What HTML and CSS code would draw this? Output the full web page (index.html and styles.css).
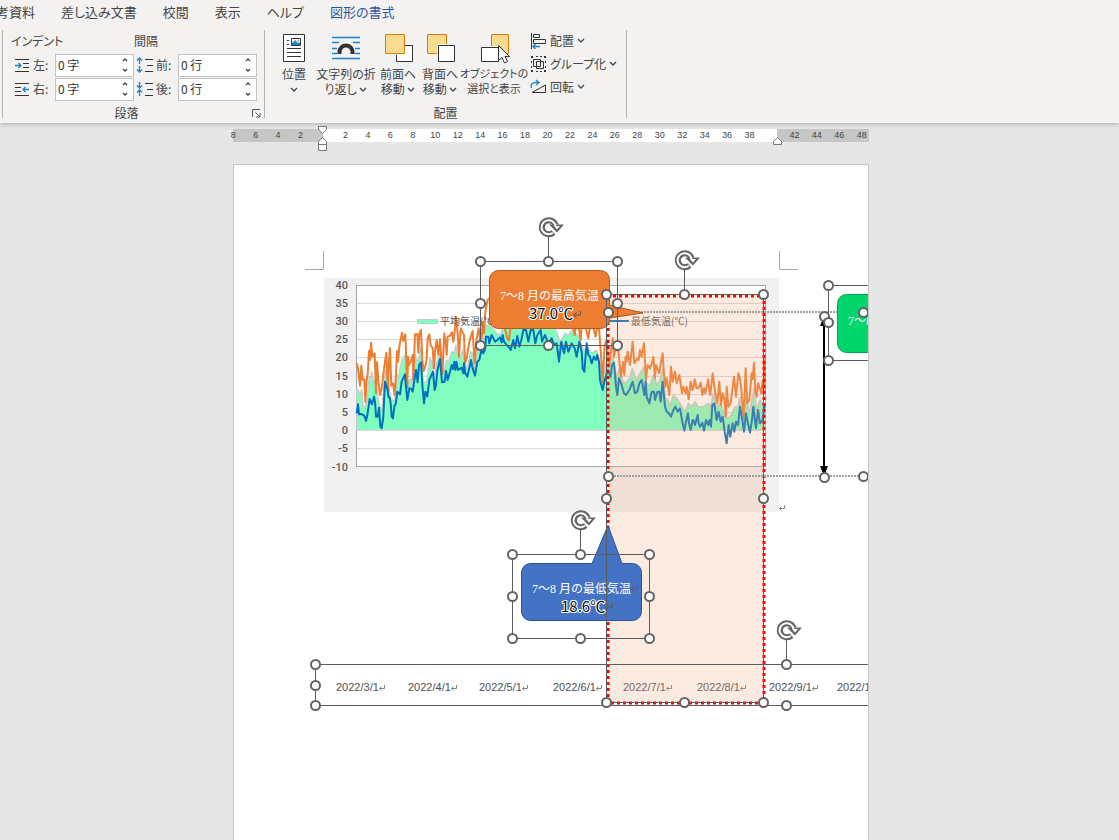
FILE: index.html
```html
<!DOCTYPE html>
<html lang="ja">
<head>
<meta charset="utf-8">
<title>図形の書式</title>
<link rel="stylesheet" href="styles.css">
</head>
<body>
<header class="ribbon">
  <nav class="tabs">
    <button class="tab">参考資料</button>
    <button class="tab">差し込み文書</button>
    <button class="tab">校閲</button>
    <button class="tab">表示</button>
    <button class="tab">ヘルプ</button>
    <button class="tab tab-active">図形の書式</button>
  </nav>
  <div class="groups">
    <section class="group group-paragraph">
      <div class="fields">
        <span class="field-head">インデント</span>
        <span class="field-head">間隔</span>
        <div class="field">
          <svg class="mini" viewBox="0 0 18 16"><path class="ink" d="M2 2.500h14M10 6.500h6M10 10.500h6M2 14.500h14"/><path class="blue" d="M2 8.500h6M5.500 6l2.500 2.500L5.500 11"/></svg>
          <label for="left">左:</label>
          <span class="spin"><input id="left" value="0 字"><span class="steps"><button aria-label="左を増やす"><svg viewBox="0 0 6 4"><path d="M1 3l2-2 2 2"/></svg></button><button aria-label="左を減らす"><svg viewBox="0 0 6 4"><path d="M1 1l2 2 2-2"/></svg></button></span></span>
        </div>
        <div class="field">
          <svg class="mini" viewBox="0 0 18 16"><path class="ink" d="M9 2.500h8M11 8.500h6M9 14.500h8"/><path class="blue" d="M3.500 1v6M1 3.500L3.500 1 6 3.500M3.500 9v6M1 12.500L3.500 15 6 12.500"/></svg>
          <label for="before">前:</label>
          <span class="spin"><input id="before" value="0 行"><span class="steps"><button aria-label="前を増やす"><svg viewBox="0 0 6 4"><path d="M1 3l2-2 2 2"/></svg></button><button aria-label="前を減らす"><svg viewBox="0 0 6 4"><path d="M1 1l2 2 2-2"/></svg></button></span></span>
        </div>
        <div class="field">
          <svg class="mini" viewBox="0 0 18 16"><path class="ink" d="M2 2.500h14M2 6.500h6M2 10.500h6M2 14.500h14"/><path class="blue" d="M10 8.500h6M12.500 6L10 8.500l2.500 2.500"/></svg>
          <label for="right">右:</label>
          <span class="spin"><input id="right" value="0 字"><span class="steps"><button aria-label="右を増やす"><svg viewBox="0 0 6 4"><path d="M1 3l2-2 2 2"/></svg></button><button aria-label="右を減らす"><svg viewBox="0 0 6 4"><path d="M1 1l2 2 2-2"/></svg></button></span></span>
        </div>
        <div class="field">
          <svg class="mini" viewBox="0 0 18 16"><path class="ink" d="M9 2.500h8M11 8.500h6M9 14.500h8"/><path class="blue" d="M3.500 1v6M1 4.500L3.500 7 6 4.500M3.500 9v6M1 11.500L3.500 9 6 11.500"/></svg>
          <label for="after">後:</label>
          <span class="spin"><input id="after" value="0 行"><span class="steps"><button aria-label="後を増やす"><svg viewBox="0 0 6 4"><path d="M1 3l2-2 2 2"/></svg></button><button aria-label="後を減らす"><svg viewBox="0 0 6 4"><path d="M1 1l2 2 2-2"/></svg></button></span></span>
        </div>
      </div>
      <footer class="group-name">段落</footer>
      <button class="launcher" aria-label="段落の設定"><svg viewBox="0 0 9 9"><path d="M.5 8V.5H8M3.500 3.500l4 4M8 4v4H4"/></svg></button>
    </section>

    <section class="group group-arrange">
      <div class="tools">
        <button class="tool">
          <svg class="icon" viewBox="0 0 32 32"><path fill="#fff" stroke="#333" d="M5.500 2.500h21v27h-21z"/><path class="ink" d="M9 8.500h2M9 12.500h2M9 16.500h14M9 20.500h14M9 24.500h14"/><path fill="#fff" stroke="#333" d="M13.500 6.500h9v7h-9z"/><path fill="#1e83c8" d="M14 13v-2l3-3 3 3 1-1 1 1v2z"/><circle cx="20" cy="8.500" r="1" fill="#f09030"/></svg>
          <span>位置</span><span><svg class="chev" viewBox="0 0 8 5"><path d="M1 1l3 3 3-3"/></svg></span>
        </button>
        <button class="tool tool-wide">
          <svg class="icon" viewBox="0 0 32 32"><path class="blue" d="M2 5.500h28M2 10.500h7M23 10.500h7M2 16.500h5M25 16.500h5M2 21.500h5M25 21.500h5M2 26.500h28"/><path fill="none" stroke="#333" stroke-width="4" d="M9.500 22v-2a6.500 6.500 0 0 1 13 0v2"/></svg>
          <span>文字列の折</span><span>り返し <svg class="chev" viewBox="0 0 8 5"><path d="M1 1l3 3 3-3"/></svg></span>
        </button>
        <button class="tool">
          <svg class="icon" viewBox="0 0 32 32"><path fill="#fff" stroke="#333" d="M14.500 13.500h16v16h-16z"/><path fill="#f3f2f1" d="M1 1h22v22H1z"/><path fill="#f8db8f" stroke="#e07b0a" d="M3.500 2.500h19v19h-19z"/></svg>
          <span>前面へ</span><span>移動 <svg class="chev" viewBox="0 0 8 5"><path d="M1 1l3 3 3-3"/></svg></span>
        </button>
        <button class="tool">
          <svg class="icon" viewBox="0 0 32 32"><path fill="#f8db8f" stroke="#e07b0a" d="M3.500 2.500h19v19h-19z"/><path fill="#f3f2f1" d="M13 12h19v19H13z"/><path fill="#fff" stroke="#333" d="M14.500 13.500h16v16h-16z"/></svg>
          <span>背面へ</span><span>移動 <svg class="chev" viewBox="0 0 8 5"><path d="M1 1l3 3 3-3"/></svg></span>
        </button>
        <button class="tool tool-select">
          <svg class="icon" viewBox="0 0 32 32"><path fill="#f8db8f" stroke="#e07b0a" d="M13.500 2.500h17v19h-17z"/><path fill="#f3f2f1" d="M2 14h20v17H2z"/><path fill="#fff" stroke="#333" d="M3.500 15.500h17v14h-17z"/><path fill="#fff" stroke="#333" d="M20.500 13.500v15l3.500-3 2.500 5.500 3-1.500-2.500-5h4.500z"/></svg>
          <span>オブジェクトの</span><span>選択と表示</span>
        </button>
        <div class="stack">
          <button class="small"><svg class="mini" viewBox="0 0 18 16"><path class="ink" d="M2.500 0v16M4.500 1.500h6v3h-6zM4.500 6.500h12v4h-12z"/><path class="blue" d="M4 13.500h7M6.500 11L4 13.500 6.500 16"/></svg>配置 <svg class="chev" viewBox="0 0 8 5"><path d="M1 1l3 3 3-3"/></svg></button>
          <button class="small"><svg class="mini" viewBox="0 0 18 16"><path class="ink" d="M4.500 3.500h7v7h-7zM7.500 5.500h7v7h-7z"/><path fill="#333" d="M2 0h2v2H2zM15 0h2v2h-2zM2 14h2v2H2zM15 14h2v2h-2zM7 0h2v1H7zM11 0h2v1h-2zM7 15h2v1H7zM11 15h2v1h-2zM2 5h1v2H2zM2 10h1v2H2zM16 5h1v2h-1zM16 10h1v2h-1z"/></svg>グループ化 <svg class="chev" viewBox="0 0 8 5"><path d="M1 1l3 3 3-3"/></svg></button>
          <button class="small"><svg class="mini" viewBox="0 0 18 16"><path class="ink" d="M3 13.500h13.500V6z"/><path class="blue" d="M2.500 9C1 5 4 3 9 3.500M7 1l3 2.500L7 6"/></svg>回転 <svg class="chev" viewBox="0 0 8 5"><path d="M1 1l3 3 3-3"/></svg></button>
        </div>
      </div>
      <footer class="group-name">配置</footer>
    </section>
  </div>
</header>

<main class="workspace">
  <div class="ruler">
    <div class="ticks"><span>8</span><span>6</span><span>4</span><span>2</span><span></span><span>2</span><span>4</span><span>6</span><span>8</span><span>10</span><span>12</span><span>14</span><span>16</span><span>18</span><span>20</span><span>22</span><span>24</span><span>26</span><span>28</span><span>30</span><span>32</span><span>34</span><span>36</span><span>38</span><span></span><span>42</span><span>44</span><span>46</span><span>48</span></div>
    <svg class="marker marker-left" viewBox="0 0 10 26"><path d="M.5 .5h8v3l-4 4-4-4zM.5 18.500v-3l4-4 4 4v3zM.5 18.500h8v6h-8z"/></svg>
    <svg class="marker marker-right" viewBox="0 0 10 26"><path d="M.5 18.500v-3l4-4 4 4v3z"/></svg>
  </div>

  <article class="page">
    <svg class="canvas" viewBox="234 165 634 675">
      <defs>
        <circle id="h" r="4.500" fill="#fff" stroke="#636363" stroke-width="2"/>
        <g id="rot">
          <path d="M6.500 -2A7 7 0 1 0 4.500 5.500" fill="none" stroke="#636363" stroke-width="6"/>
          <path d="M0 -2.500H15L8 5.500Z" fill="#636363"/>
          <path d="M6.500 -1A7 7 0 1 0 3.800 5.800" fill="none" stroke="#fff" stroke-width="2"/>
          <path d="M5 -1H11L8 2.500Z" fill="#fff"/>
        </g>
        <path id="ret" d="M5.500 -6v3.500H.5M2.500 -4.500l-2 2 2 2" fill="none" stroke="#858585"/>
        <path id="ret-dark" d="M7.500 -7v4H.5M3.500 -5.500l-3 2.500 3 2.500" fill="none" stroke="#5a5a5a"/>
      </defs>

      <path class="crop" d="M323.500 251v18.500H305M779.500 251v18.500H798"/>
      <rect x="324" y="278" width="455" height="234" fill="#f1f1f1"/>
      <rect x="356.500" y="285.500" width="409" height="181" fill="#fff" stroke="#a6a6a6"/>
      <path class="grid" d="M357 303.500h408M357 321.500h408M357 339.500h408M357 357.500h408M357 376.500h408M357 394.500h408M357 412.500h408M357 430.500h408M357 448.500h408"/>
      <g class="axis">
        <text x="348" y="289">40</text><text x="348" y="307">35</text><text x="348" y="325">30</text><text x="348" y="343">25</text><text x="348" y="361">20</text><text x="348" y="380">15</text><text x="348" y="398">10</text><text x="348" y="416">5</text><text x="348" y="434">0</text><text x="348" y="452">-5</text><text x="348" y="471">-10</text>
      </g>

      <!-- Series are plotted on a grid of three units per pixel -->
      <g transform="translate(300 245) scale(.33333)" fill="none" stroke-linejoin="round">
        <path fill="#80ffbf" stroke="#c9c9c9" stroke-width="4" d="M170 556V430L176 438 180 450 185 433 190 490 195 485 200 470 208 395 213 398 215 380 222 420 226 400 230 435 238 480 245 500 252 420 256 375 265 410 272 460 284 470 292 390 296 402 300 370 306 345 315 330 322 430 328 405 335 400 340 430 346 330 351 350 355 345 362 305 370 415 380 410 390 340 396 352 402 400 410 355 420 325 430 385 440 345 446 352 455 320 462 325 468 300 475 345 480 340 488 315 498 375 505 355 512 320 518 325 524 380 535 300 542 312 548 300 558 240 575 245 590 265 600 270 610 245 650 240 710 240 760 245 770 260 780 295 795 265 805 270 815 255 825 265 835 270 850 315 865 310 875 325 890 315 905 375 913 385 918 350 930 350 938 335 945 370 950 395 958 370 965 390 970 415 980 410 989 400 997 370 1004 390 1010 405 1020 385 1033 365 1040 415 1050 420 1060 390 1065 400 1070 420 1080 405 1088 370 1096 460 1105 465 1110 485 1120 450 1130 460 1140 475 1155 500 1165 475 1175 485 1185 470 1195 485 1210 485 1225 475 1230 490 1240 445 1250 485 1262 475 1278 520 1290 515 1305 485 1312 490 1320 455 1330 530 1338 445 1348 505 1362 430 1370 495 1380 465 1388 475 1395 475V556Z"/>
        <path stroke="#d9d9d9" stroke-width="3" d="M170 556h1225"/>
        <path stroke="#ed7d31" stroke-width="6" d="M170 355L174 370 180 422 184 362 188 405 193 403 196 470 200 405 203 388 207 318 210 345 213 293 217 335 224 325 228 445 231 352 235 405 240 450 246 425 251 380 255 350 259 323 264 440 267 345 270 310 274 422 279 415 284 450 288 385 291 318 294 350 298 305 306 263 310 288 316 268 322 428 324 335 326 362 332 350 338 330 340 405 345 268 352 268 355 322 358 268 363 255 367 345 371 378 377 360 380 340 383 280 388 268 392 300 398 310 402 370 406 310 410 285 415 330 420 283 427 388 433 265 438 300 440 330 443 275 450 272 456 262 460 290 465 250 468 215 473 265 477 335 482 250 488 262 492 270 495 355 500 340 508 290 518 258 524 355 530 280 536 250 540 285 545 280 548 230 552 265 556 200 563 165 568 160 590 145 610 230 622 280 627 287 636 210 675 220 685 200 710 180 735 150 810 200 824 270 832 220 842 285 846 230 856 245 865 280 873 220 887 275 895 220 903 330 908 410 914 300 920 285 927 365 938 280 942 335 947 310 955 320 963 395 969 350 973 390 977 335 980 350 983 320 990 360 998 290 1003 355 1012 340 1016 345 1020 315 1025 335 1032 295 1036 365 1038 405 1043 360 1050 370 1056 355 1060 335 1065 400 1068 360 1078 385 1083 350 1088 325 1091 375 1096 425 1100 400 1108 450 1113 365 1118 410 1125 380 1130 415 1138 390 1146 445 1150 425 1157 445 1160 425 1166 463 1172 410 1177 435 1180 430 1184 403 1190 430 1195 430 1202 413 1207 450 1212 430 1216 445 1225 403 1228 435 1231 450 1238 385 1245 440 1252 475 1258 410 1263 480 1268 445 1273 463 1278 515 1280 425 1285 485 1292 475 1302 395 1308 455 1315 385 1320 400 1325 445 1331 520 1337 370 1342 475 1348 465 1355 385 1358 403 1362 353 1366 440 1370 455 1374 415 1378 425 1384 445 1388 410 1391 435 1395 340"/>
        <path stroke="#0070c0" stroke-width="6" d="M170 505L174 478 177 508 183 507 190 510 194 515 198 528 202 510 205 490 209 462 216 478 222 455 225 470 228 515 233 515 237 488 241 545 245 550 250 515 255 410 263 435 265 455 269 458 272 475 275 515 279 520 283 483 287 478 292 440 300 448 305 410 315 388 318 425 322 465 328 430 334 432 338 440 344 400 348 375 353 412 357 360 363 352 367 420 372 475 376 440 382 455 388 405 399 380 404 435 408 420 412 378 420 342 426 412 434 410 438 378 443 405 450 380 455 360 459 372 463 350 466 375 469 350 474 375 485 368 490 385 492 355 496 385 502 395 508 370 513 345 518 370 525 392 532 350 538 345 545 310 550 325 556 310 558 275 565 275 568 295 575 270 585 290 592 285 600 277 605 292 608 270 612 290 620 300 627 307 632 315 640 285 645 310 652 273 658 305 664 285 670 255 678 255 685 290 692 255 700 255 706 295 712 270 722 255 726 290 735 270 745 295 755 280 763 300 770 295 777 350 784 290 792 325 798 290 805 320 815 295 824 310 830 335 838 290 845 320 848 370 853 380 860 295 865 330 870 335 875 355 882 335 888 345 892 330 897 350 900 405 908 435 913 410 918 395 922 375 932 395 936 360 942 353 948 425 952 450 957 400 965 420 972 445 978 450 988 435 998 410 1005 445 1012 440 1018 415 1025 405 1033 450 1037 410 1040 455 1048 475 1055 440 1062 440 1065 465 1072 440 1078 440 1082 470 1088 410 1095 485 1100 500 1105 503 1113 515 1120 495 1126 485 1133 500 1140 490 1147 530 1153 557 1158 530 1164 505 1167 535 1172 555 1178 525 1182 530 1185 540 1193 510 1196 535 1200 545 1207 533 1212 557 1218 525 1225 540 1229 525 1233 545 1237 480 1243 475 1250 525 1256 500 1262 530 1268 515 1274 560 1280 595 1286 540 1291 575 1298 535 1303 560 1308 530 1314 540 1320 485 1327 525 1332 560 1338 505 1344 535 1350 563 1356 525 1360 485 1368 550 1374 495 1380 535 1388 525 1394 475"/>
      </g>
      <rect x="417.500" y="319.500" width="20" height="4" fill="#80ffbf" stroke="#c9c9c9"/>
      <path d="M609 321h20" stroke="#0070c0" stroke-width="2"/>
      <g class="legend"><text x="440" y="325">平均気温(℃)</text><text x="631" y="325">最低気温(℃)</text></g>
      <use href="#ret" x="779" y="511"/>

      <g class="dates">
        <text x="336" y="691">2022/3/1</text><text x="408" y="691">2022/4/1</text><text x="479" y="691">2022/5/1</text><text x="553" y="691">2022/6/1</text><text x="623" y="691">2022/7/1</text><text x="697" y="691">2022/8/1</text><text x="769" y="691">2022/9/1</text><text x="837" y="691">2022/10/1</text>
      </g>
      <use href="#ret" x="379" y="691"/><use href="#ret" x="451" y="691"/><use href="#ret" x="522" y="691"/><use href="#ret" x="596" y="691"/><use href="#ret" x="666" y="691"/><use href="#ret" x="740" y="691"/><use href="#ret" x="812" y="691"/>

      <rect x="607" y="295" width="157" height="408" fill="#efab83" fill-opacity=".25"/>
      <path d="M607 296h157V703H608V296" fill="none" stroke="#f00" stroke-width="3" stroke-dasharray="3 3"/>
      <path d="M608 312h260M608 476h260" stroke="#a0a0a0" stroke-width="2" stroke-dasharray="2 1"/>

      <path d="M498.500 270.500h102a9 9 0 0 1 9 9V305L643 313 609.500 318v1.500a9 9 0 0 1-9 9h-102a9 9 0 0 1-9-9v-40a9 9 0 0 1 9-9z" fill="#ed7d31" stroke="#ae5a21"/>
      <text class="caption" x="500" y="300">7～8 月の最高気温</text>
      <text class="value" x="529" y="319">37.0℃</text>
      <use href="#ret-dark" x="573" y="318"/>

      <path d="M530.500 563.500H592L608 525.500 622 563.500h10.500a9 9 0 0 1 9 9v39a9 9 0 0 1-9 9h-102a9 9 0 0 1-9-9v-39a9 9 0 0 1 9-9z" fill="#4472c4" stroke="#2f528f"/>
      <text class="caption" x="532" y="593">7～8 月の最低気温</text>
      <text class="value" x="561" y="612">18.6℃</text>
      <use href="#ret-dark" x="630" y="592"/><use href="#ret-dark" x="605" y="610"/>

      <rect x="837.500" y="294.500" width="120" height="58" rx="9" fill="#00d66c" stroke="#00a650"/>
      <text class="caption" x="848" y="325">7～8 月の平均気温</text>
      <path d="M824 322V472" stroke="#000" stroke-width="2"/>
      <path d="M824 316l4 10h-8zM824 476l-4-10h8z"/>

      <g class="frames">
        <rect x="480.500" y="261.500" width="137" height="84"/>
        <rect x="606.500" y="294.500" width="157" height="408"/>
        <rect x="512.500" y="554.500" width="137" height="84"/>
        <rect x="828.500" y="285.500" width="138" height="75"/>
        <rect x="315.500" y="664.500" width="942" height="41"/>
        <path d="M548.500 236v22M684.500 269v22M580.500 529v22M786.500 639v22"/>
      </g>
      <use href="#rot" x="549" y="227"/><use href="#rot" x="685" y="260"/><use href="#rot" x="581" y="520"/><use href="#rot" x="787" y="630"/>
      <use href="#h" x="480.500" y="261.500"/><use href="#h" x="548.500" y="261.500"/><use href="#h" x="617.500" y="261.500"/>
      <use href="#h" x="480.500" y="303.500"/><use href="#h" x="617.500" y="303.500"/>
      <use href="#h" x="480.500" y="345.500"/><use href="#h" x="548.500" y="345.500"/><use href="#h" x="617.500" y="345.500"/>
      <use href="#h" x="606.500" y="294.500"/><use href="#h" x="684.500" y="294.500"/><use href="#h" x="763.500" y="294.500"/>
      <use href="#h" x="606.500" y="498.500"/><use href="#h" x="763.500" y="498.500"/>
      <use href="#h" x="606.500" y="702.500"/><use href="#h" x="684.500" y="702.500"/><use href="#h" x="763.500" y="702.500"/>
      <use href="#h" x="608.500" y="312.500"/><use href="#h" x="608.500" y="476.500"/>
      <use href="#h" x="512.500" y="554.500"/><use href="#h" x="580.500" y="554.500"/><use href="#h" x="649.500" y="554.500"/>
      <use href="#h" x="512.500" y="596.500"/><use href="#h" x="649.500" y="596.500"/>
      <use href="#h" x="512.500" y="638.500"/><use href="#h" x="580.500" y="638.500"/><use href="#h" x="649.500" y="638.500"/>
      <use href="#h" x="824.500" y="316.500"/><use href="#h" x="824.500" y="477.500"/>
      <use href="#h" x="828.500" y="285.500"/><use href="#h" x="828.500" y="322.500"/><use href="#h" x="828.500" y="360.500"/>
      <use href="#h" x="863.500" y="312.500"/><use href="#h" x="863.500" y="476.500"/>
      <use href="#h" x="315.500" y="664.500"/><use href="#h" x="315.500" y="685.500"/><use href="#h" x="315.500" y="705.500"/>
      <use href="#h" x="786.500" y="664.500"/><use href="#h" x="786.500" y="705.500"/>
    </svg>
  </article>
</main>
</body>
</html>
```

FILE: styles.css
```css
* { box-sizing: border-box; }

body {
  margin: 0;
  min-height: 100vh;
  display: flex;
  flex-direction: column;
  overflow: hidden;
  background: #e6e6e6;
  color: #444;
  font: 12px/15px "Noto Sans CJK JP", sans-serif;
  font-feature-settings: "palt";
}

button {
  margin: 0;
  padding: 0;
  border: 0;
  background: none;
  color: inherit;
  font: inherit;
  font-feature-settings: inherit;
  white-space: nowrap;
}

svg { flex: none; }

/* Ribbon */
.ribbon {
  position: relative;
  background: #f3f2f1;
  box-shadow: 0 1px 5px #aaa;
}

.tabs {
  display: flex;
  gap: 26px;
  height: 26px;
  margin-left: -17px;
  padding-bottom: 4px;
  font-size: 13px;
}

.tab-active { color: #2b579a; }

.groups {
  display: flex;
  height: 97px;
  padding: 4px 0 5px 2px;
}

.group {
  position: relative;
  display: flex;
  flex-direction: column;
  justify-content: space-between;
  border-right: 1px solid #b5b3b1;
}

.group-paragraph {
  width: 263px;
  border-left: 1px solid #b5b3b1;
}

.group-arrange { width: 362px; }

.group-name {
  height: 10px;
  line-height: 10px;
  text-align: center;
}

.group-paragraph .group-name { padding-right: 14px; }

.fields {
  display: grid;
  grid-template-columns: 123px 123px;
  grid-template-rows: 23px 24px 24px;
  padding-left: 8px;
}

.field-head { line-height: 22px; }

.field {
  display: flex;
  align-items: center;
}

.field .mini { margin-left: 2px; }

.field label {
  flex: 1;
  padding: 0 0 2px 2px;
}

.spin {
  display: flex;
  width: 79px;
  height: 23px;
  border: 1px solid #c4c2c0;
  background: #fff;
}

.spin input {
  flex: 1;
  min-width: 0;
  padding: 0 0 2px 2px;
  border: 0;
  outline: 0;
  background: none;
  color: #333;
  font: inherit;
}

.steps {
  display: flex;
  flex-direction: column;
  width: 16px;
}

.steps button {
  display: flex;
  flex: 1;
  align-items: center;
  justify-content: center;
}

.steps svg { width: 6px; height: 4px; }

.steps path,
.chev path {
  fill: none;
  stroke: #444;
  stroke-width: 1.3;
}

.launcher {
  position: absolute;
  right: 3px;
  bottom: 0;
  width: 9px;
  height: 9px;
  display: flex;
}

.launcher path { fill: none; stroke: #555; }

.tools {
  display: flex;
  padding: 2px 0 0 8px;
}

.tool {
  display: flex;
  flex-direction: column;
  align-items: center;
  width: 42px;
}

.tool-wide { width: 62px; }
.tool-select { width: 66px; font-size: 11px; }

.tool span { height: 15px; }

.icon {
  width: 32px;
  height: 32px;
  margin-bottom: 2px;
}

.chev {
  width: 8px;
  height: 5px;
  vertical-align: 2px;
}

.mini { width: 18px; height: 16px; }
.ink { fill: none; stroke: #333; }
.blue { fill: none; stroke: #1e83c8; stroke-width: 1.3; }

.stack {
  display: flex;
  flex-direction: column;
  align-items: flex-start;
  margin-top: -3px;
  padding-left: 2px;
}

.small {
  display: flex;
  align-items: center;
  gap: 3px;
  height: 23px;
}

/* Document area */
.workspace {
  flex: 1;
  display: flex;
  flex-direction: column;
  align-items: center;
  padding: 6px 17px 0 0;
}

.ruler {
  position: relative;
  width: 636px;
  height: 13px;
  background: linear-gradient(90deg, #c6c6c6 90px, #fff 90px 544px, #c6c6c6 544px);
}

.ticks {
  display: grid;
  grid-auto-flow: column;
  grid-auto-columns: 1fr;
  margin: 0 -4px 0 -11px;
  color: #444;
  font: 9px/13px "Liberation Sans", sans-serif;
  text-align: center;
}

.marker {
  position: absolute;
  top: -3px;
  width: 10px;
  height: 26px;
}

.marker path { fill: #fff; stroke: #777; }
.marker-left { left: 85px; }
.marker-right { left: 540px; }

.page {
  flex: 1;
  width: 636px;
  margin-top: 22px;
  border: 1px solid #c6c6c6;
  border-bottom: 0;
  background: #fff;
}

.canvas { display: block; width: 100%; }
.crop { fill: none; stroke: #a6a6a6; }
.grid { stroke: #d9d9d9; }
.frames { fill: none; stroke: #5c5c5c; }

.axis {
  fill: #595959;
  font: 500 11px Roboto, sans-serif;
  text-anchor: end;
}

.legend { fill: #595959; font-size: 10px; font-feature-settings: normal; }
.dates { fill: #505050; font: 11px "Liberation Sans", sans-serif; }

.caption {
  fill: #fff;
  font: 12px "Liberation Serif", "Noto Sans CJK JP", serif;
  font-feature-settings: normal;
}

.value {
  fill: #111;
  stroke: #fff;
  stroke-width: 2px;
  paint-order: stroke;
  font-size: 15px;
  font-feature-settings: normal;
}
```
